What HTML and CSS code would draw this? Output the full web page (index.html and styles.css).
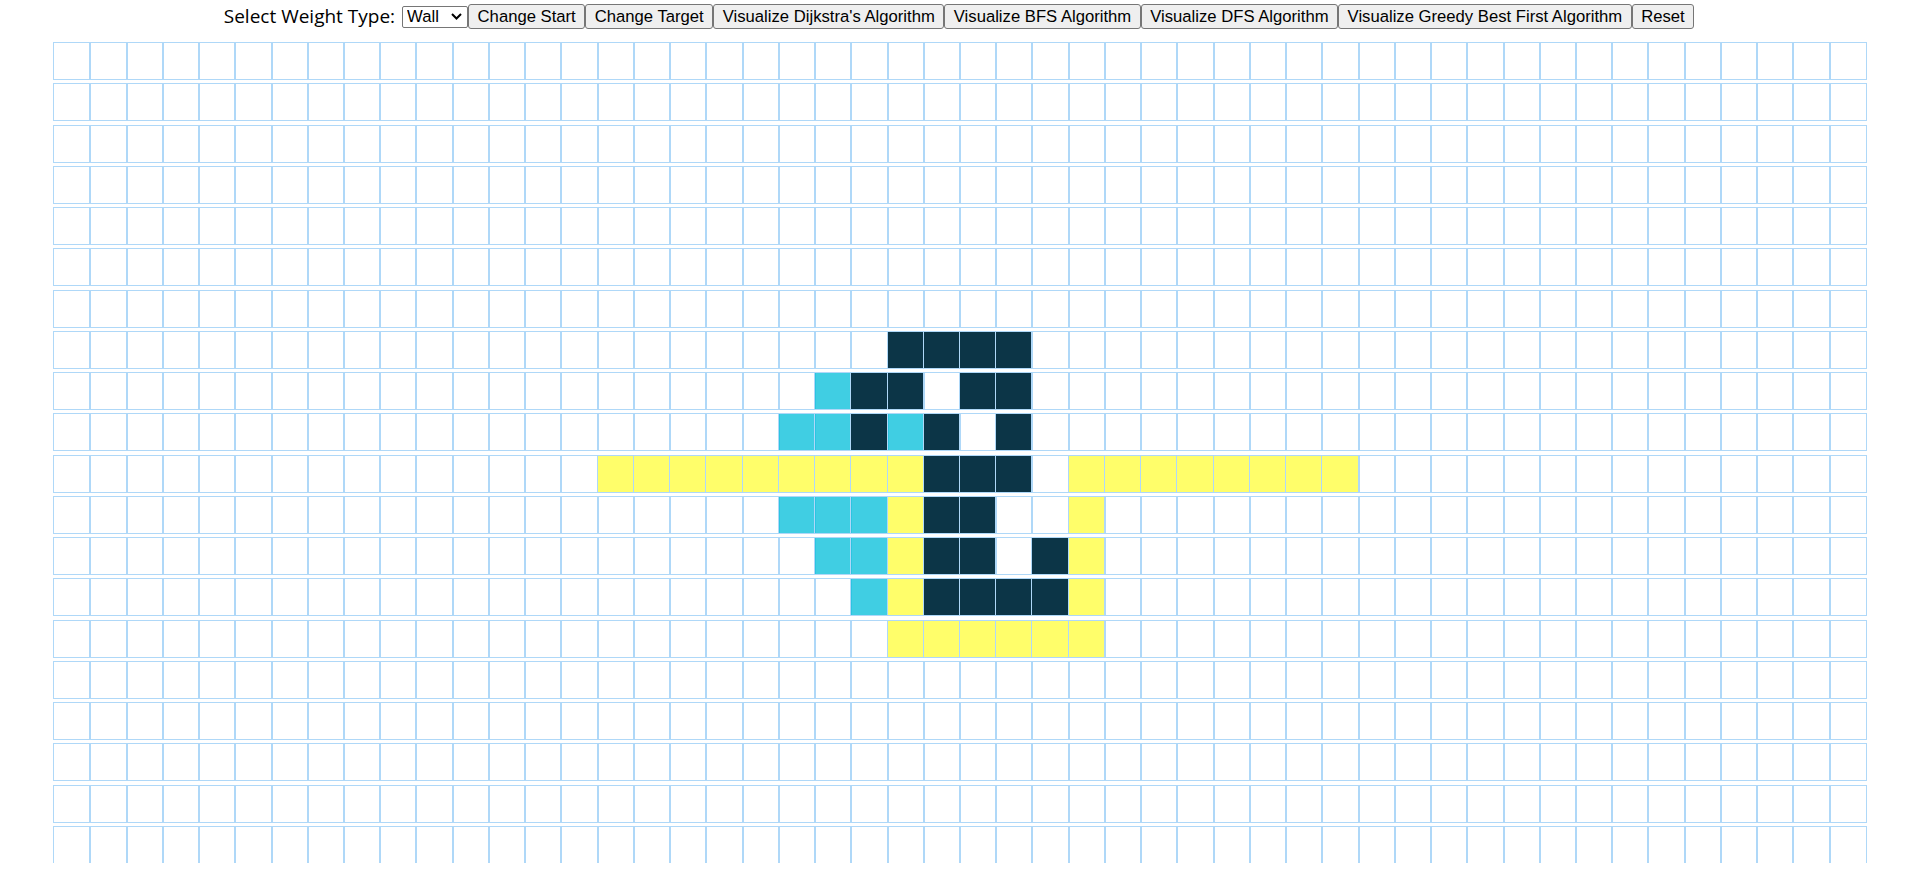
FILE: index.html
```html
<!DOCTYPE html>
<html>
<head>
<meta charset="utf-8">
<title>Pathfinding Visualizer</title>
<link rel="stylesheet" href="styles.css">
</head>
<body>
<div class="toolbar">
<label class="weight-label" for="weight">Select Weight Type:</label><select id="weight" class="weight-select"><option>Wall</option><option>Weight</option></select><button class="btn">Change Start</button><button class="btn">Change Target</button><button class="btn">Visualize Dijkstra's Algorithm</button><button class="btn">Visualize BFS Algorithm</button><button class="btn">Visualize DFS Algorithm</button><button class="btn">Visualize Greedy Best First Algorithm</button><button class="btn">Reset</button>
</div>
<div class="grid">
<div class="row"><i></i><i></i><i></i><i></i><i></i><i></i><i></i><i></i><i></i><i></i><i></i><i></i><i></i><i></i><i></i><i></i><i></i><i></i><i></i><i></i><i></i><i></i><i></i><i></i><i></i><i></i><i></i><i></i><i></i><i></i><i></i><i></i><i></i><i></i><i></i><i></i><i></i><i></i><i></i><i></i><i></i><i></i><i></i><i></i><i></i><i></i><i></i><i></i><i></i><i></i></div>
<div class="row"><i></i><i></i><i></i><i></i><i></i><i></i><i></i><i></i><i></i><i></i><i></i><i></i><i></i><i></i><i></i><i></i><i></i><i></i><i></i><i></i><i></i><i></i><i></i><i></i><i></i><i></i><i></i><i></i><i></i><i></i><i></i><i></i><i></i><i></i><i></i><i></i><i></i><i></i><i></i><i></i><i></i><i></i><i></i><i></i><i></i><i></i><i></i><i></i><i></i><i></i></div>
<div class="row"><i></i><i></i><i></i><i></i><i></i><i></i><i></i><i></i><i></i><i></i><i></i><i></i><i></i><i></i><i></i><i></i><i></i><i></i><i></i><i></i><i></i><i></i><i></i><i></i><i></i><i></i><i></i><i></i><i></i><i></i><i></i><i></i><i></i><i></i><i></i><i></i><i></i><i></i><i></i><i></i><i></i><i></i><i></i><i></i><i></i><i></i><i></i><i></i><i></i><i></i></div>
<div class="row"><i></i><i></i><i></i><i></i><i></i><i></i><i></i><i></i><i></i><i></i><i></i><i></i><i></i><i></i><i></i><i></i><i></i><i></i><i></i><i></i><i></i><i></i><i></i><i></i><i></i><i></i><i></i><i></i><i></i><i></i><i></i><i></i><i></i><i></i><i></i><i></i><i></i><i></i><i></i><i></i><i></i><i></i><i></i><i></i><i></i><i></i><i></i><i></i><i></i><i></i></div>
<div class="row"><i></i><i></i><i></i><i></i><i></i><i></i><i></i><i></i><i></i><i></i><i></i><i></i><i></i><i></i><i></i><i></i><i></i><i></i><i></i><i></i><i></i><i></i><i></i><i></i><i></i><i></i><i></i><i></i><i></i><i></i><i></i><i></i><i></i><i></i><i></i><i></i><i></i><i></i><i></i><i></i><i></i><i></i><i></i><i></i><i></i><i></i><i></i><i></i><i></i><i></i></div>
<div class="row"><i></i><i></i><i></i><i></i><i></i><i></i><i></i><i></i><i></i><i></i><i></i><i></i><i></i><i></i><i></i><i></i><i></i><i></i><i></i><i></i><i></i><i></i><i></i><i></i><i></i><i></i><i></i><i></i><i></i><i></i><i></i><i></i><i></i><i></i><i></i><i></i><i></i><i></i><i></i><i></i><i></i><i></i><i></i><i></i><i></i><i></i><i></i><i></i><i></i><i></i></div>
<div class="row"><i></i><i></i><i></i><i></i><i></i><i></i><i></i><i></i><i></i><i></i><i></i><i></i><i></i><i></i><i></i><i></i><i></i><i></i><i></i><i></i><i></i><i></i><i></i><i></i><i></i><i></i><i></i><i></i><i></i><i></i><i></i><i></i><i></i><i></i><i></i><i></i><i></i><i></i><i></i><i></i><i></i><i></i><i></i><i></i><i></i><i></i><i></i><i></i><i></i><i></i></div>
<div class="row">
<i></i><i></i><i></i><i></i><i></i><i></i><i></i><i></i><i></i><i></i>
<i></i><i></i><i></i><i></i><i></i><i></i><i></i><i></i><i></i><i></i>
<i></i><i></i><i></i><i class="w"></i><i class="w"></i><i class="w"></i><i class="w"></i><i></i><i></i><i></i>
<i></i><i></i><i></i><i></i><i></i><i></i><i></i><i></i><i></i><i></i>
<i></i><i></i><i></i><i></i><i></i><i></i><i></i><i></i><i></i><i></i>
</div>
<div class="row">
<i></i><i></i><i></i><i></i><i></i><i></i><i></i><i></i><i></i><i></i>
<i></i><i></i><i></i><i></i><i></i><i></i><i></i><i></i><i></i><i></i>
<i></i><i class="v"></i><i class="w"></i><i class="w"></i><i></i><i class="w"></i><i class="w"></i><i></i><i></i><i></i>
<i></i><i></i><i></i><i></i><i></i><i></i><i></i><i></i><i></i><i></i>
<i></i><i></i><i></i><i></i><i></i><i></i><i></i><i></i><i></i><i></i>
</div>
<div class="row">
<i></i><i></i><i></i><i></i><i></i><i></i><i></i><i></i><i></i><i></i>
<i></i><i></i><i></i><i></i><i></i><i></i><i></i><i></i><i></i><i></i>
<i class="v"></i><i class="v"></i><i class="w"></i><i class="v"></i><i class="w"></i><i></i><i class="w"></i><i></i><i></i><i></i>
<i></i><i></i><i></i><i></i><i></i><i></i><i></i><i></i><i></i><i></i>
<i></i><i></i><i></i><i></i><i></i><i></i><i></i><i></i><i></i><i></i>
</div>
<div class="row">
<i></i><i></i><i></i><i></i><i></i><i></i><i></i><i></i><i></i><i></i>
<i></i><i></i><i></i><i></i><i></i><i class="p"></i><i class="p"></i><i class="p"></i><i class="p"></i><i class="p"></i>
<i class="p"></i><i class="p"></i><i class="p"></i><i class="p"></i><i class="w"></i><i class="w"></i><i class="w"></i><i></i><i class="p"></i><i class="p"></i>
<i class="p"></i><i class="p"></i><i class="p"></i><i class="p"></i><i class="p"></i><i class="p"></i><i></i><i></i><i></i><i></i>
<i></i><i></i><i></i><i></i><i></i><i></i><i></i><i></i><i></i><i></i>
</div>
<div class="row">
<i></i><i></i><i></i><i></i><i></i><i></i><i></i><i></i><i></i><i></i>
<i></i><i></i><i></i><i></i><i></i><i></i><i></i><i></i><i></i><i></i>
<i class="v"></i><i class="v"></i><i class="v"></i><i class="p"></i><i class="w"></i><i class="w"></i><i></i><i></i><i class="p"></i><i></i>
<i></i><i></i><i></i><i></i><i></i><i></i><i></i><i></i><i></i><i></i>
<i></i><i></i><i></i><i></i><i></i><i></i><i></i><i></i><i></i><i></i>
</div>
<div class="row">
<i></i><i></i><i></i><i></i><i></i><i></i><i></i><i></i><i></i><i></i>
<i></i><i></i><i></i><i></i><i></i><i></i><i></i><i></i><i></i><i></i>
<i></i><i class="v"></i><i class="v"></i><i class="p"></i><i class="w"></i><i class="w"></i><i></i><i class="w"></i><i class="p"></i><i></i>
<i></i><i></i><i></i><i></i><i></i><i></i><i></i><i></i><i></i><i></i>
<i></i><i></i><i></i><i></i><i></i><i></i><i></i><i></i><i></i><i></i>
</div>
<div class="row">
<i></i><i></i><i></i><i></i><i></i><i></i><i></i><i></i><i></i><i></i>
<i></i><i></i><i></i><i></i><i></i><i></i><i></i><i></i><i></i><i></i>
<i></i><i></i><i class="v"></i><i class="p"></i><i class="w"></i><i class="w"></i><i class="w"></i><i class="w"></i><i class="p"></i><i></i>
<i></i><i></i><i></i><i></i><i></i><i></i><i></i><i></i><i></i><i></i>
<i></i><i></i><i></i><i></i><i></i><i></i><i></i><i></i><i></i><i></i>
</div>
<div class="row">
<i></i><i></i><i></i><i></i><i></i><i></i><i></i><i></i><i></i><i></i>
<i></i><i></i><i></i><i></i><i></i><i></i><i></i><i></i><i></i><i></i>
<i></i><i></i><i></i><i class="p"></i><i class="p"></i><i class="p"></i><i class="p"></i><i class="p"></i><i class="p"></i><i></i>
<i></i><i></i><i></i><i></i><i></i><i></i><i></i><i></i><i></i><i></i>
<i></i><i></i><i></i><i></i><i></i><i></i><i></i><i></i><i></i><i></i>
</div>
<div class="row"><i></i><i></i><i></i><i></i><i></i><i></i><i></i><i></i><i></i><i></i><i></i><i></i><i></i><i></i><i></i><i></i><i></i><i></i><i></i><i></i><i></i><i></i><i></i><i></i><i></i><i></i><i></i><i></i><i></i><i></i><i></i><i></i><i></i><i></i><i></i><i></i><i></i><i></i><i></i><i></i><i></i><i></i><i></i><i></i><i></i><i></i><i></i><i></i><i></i><i></i></div>
<div class="row"><i></i><i></i><i></i><i></i><i></i><i></i><i></i><i></i><i></i><i></i><i></i><i></i><i></i><i></i><i></i><i></i><i></i><i></i><i></i><i></i><i></i><i></i><i></i><i></i><i></i><i></i><i></i><i></i><i></i><i></i><i></i><i></i><i></i><i></i><i></i><i></i><i></i><i></i><i></i><i></i><i></i><i></i><i></i><i></i><i></i><i></i><i></i><i></i><i></i><i></i></div>
<div class="row"><i></i><i></i><i></i><i></i><i></i><i></i><i></i><i></i><i></i><i></i><i></i><i></i><i></i><i></i><i></i><i></i><i></i><i></i><i></i><i></i><i></i><i></i><i></i><i></i><i></i><i></i><i></i><i></i><i></i><i></i><i></i><i></i><i></i><i></i><i></i><i></i><i></i><i></i><i></i><i></i><i></i><i></i><i></i><i></i><i></i><i></i><i></i><i></i><i></i><i></i></div>
<div class="row"><i></i><i></i><i></i><i></i><i></i><i></i><i></i><i></i><i></i><i></i><i></i><i></i><i></i><i></i><i></i><i></i><i></i><i></i><i></i><i></i><i></i><i></i><i></i><i></i><i></i><i></i><i></i><i></i><i></i><i></i><i></i><i></i><i></i><i></i><i></i><i></i><i></i><i></i><i></i><i></i><i></i><i></i><i></i><i></i><i></i><i></i><i></i><i></i><i></i><i></i></div>
<div class="row"><i></i><i></i><i></i><i></i><i></i><i></i><i></i><i></i><i></i><i></i><i></i><i></i><i></i><i></i><i></i><i></i><i></i><i></i><i></i><i></i><i></i><i></i><i></i><i></i><i></i><i></i><i></i><i></i><i></i><i></i><i></i><i></i><i></i><i></i><i></i><i></i><i></i><i></i><i></i><i></i><i></i><i></i><i></i><i></i><i></i><i></i><i></i><i></i><i></i><i></i></div>
</div>
</body>
</html>
```
FILE: styles.css
```css
html, body {
  margin: 0;
  padding: 0;
  background: #ffffff;
}

body {
  font-family: "Open Sans", "Noto Sans", sans-serif;
  color: #000000;
}

.toolbar {
  display: flex;
  justify-content: center;
  align-items: center;
  height: 25px;
  padding-top: 4px;
}

.weight-label {
  font-family: "Open Sans", sans-serif;
  font-size: 19px;
  line-height: 25px;
  margin-right: 7px;
}

.weight-select {
  -webkit-appearance: none;
  appearance: none;
  font-family: "Liberation Sans", Arial, sans-serif;
  font-size: 16.67px;
  width: 66px;
  height: 22px;
  padding: 0 0 0 4px;
  border: 1px solid #767676;
  border-radius: 2px;
  background-color: #ffffff;
  background-image: url("data:image/svg+xml;utf8,<svg xmlns='http://www.w3.org/2000/svg' width='11' height='7' viewBox='0 0 11 7'><path d='M1 1 L5.5 5.5 L10 1' fill='none' stroke='black' stroke-width='2'/></svg>");
  background-repeat: no-repeat;
  background-position: right 5px center;
  color: #000000;
}

.btn {
  font-family: "Liberation Sans", Arial, sans-serif;
  font-size: 16.67px;
  line-height: 19px;
  height: 25px;
  padding: 2px 8.5px;
  margin: 0;
  border: 1px solid #767676;
  border-radius: 3px;
  background: #efefef;
  color: #000000;
}

.grid {
  display: flex;
  flex-direction: column;
  align-items: center;
  gap: 5.02px;
  margin-top: 14px;
  padding-left: 2px;
}

.row {
  display: flex;
}

.row > i {
  display: block;
  width: 36.24px;
  height: 36.24px;
  flex: none;
  outline: 1px solid rgb(175, 216, 248);
}

.row > i.w {
  background-color: rgb(12, 53, 71);
}

.row > i.v {
  background-color: rgba(0, 190, 218, 0.75);
}

.row > i.p {
  background-color: rgb(255, 254, 106);
}
```
